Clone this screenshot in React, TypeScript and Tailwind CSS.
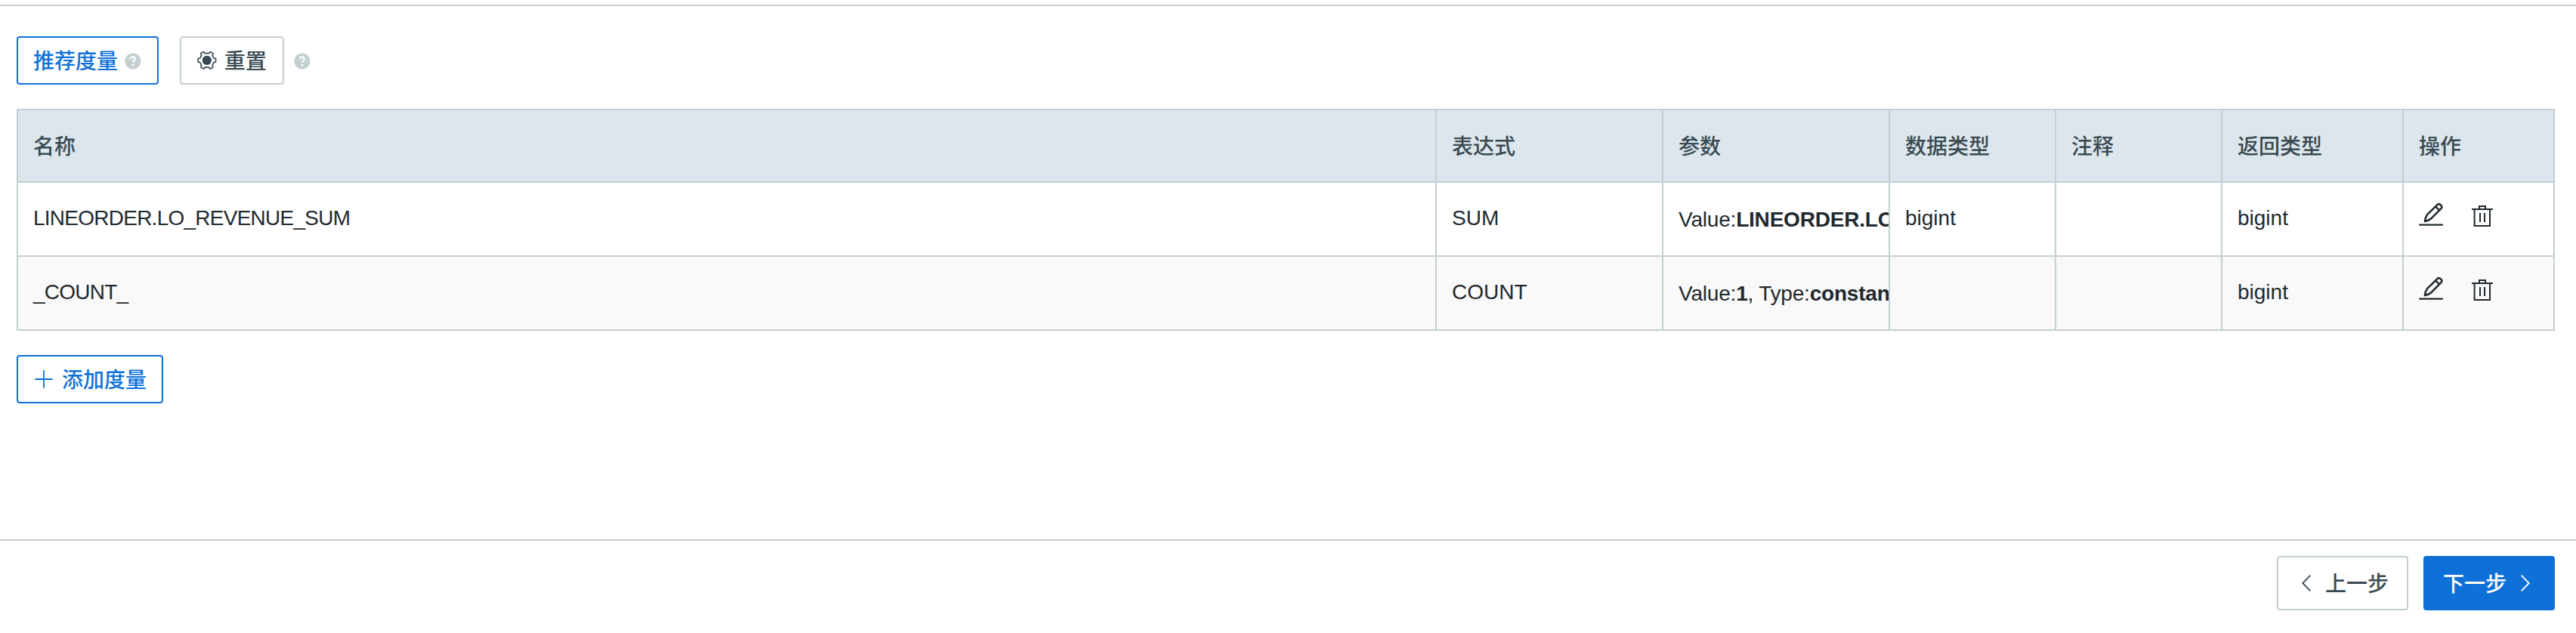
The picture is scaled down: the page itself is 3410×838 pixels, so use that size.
import React from "react";

function HelpIcon() {
  return (
    <svg viewBox="0 0 22 22" className="h-[22px] w-[22px] shrink-0" fill="none">
      <circle cx="11" cy="11" r="10.6" fill="#c4cfd2" />
      <path
        d="M8 8.4c0-1.9 1.2-3 3-3 1.7 0 2.9 1 2.9 2.6 0 2.3-2.8 2.5-2.8 5.1"
        stroke="#fff"
        strokeWidth="2.1"
      />
      <circle cx="11.1" cy="16.2" r="1.4" fill="#fff" />
    </svg>
  );
}

function GearIcon() {
  return (
    <svg viewBox="-0.2 -0.1 26.6 26.6" className="h-[26px] w-[26px] shrink-0" fill="none">
      <path
        d="M8.6 1.5 L10.4 3.6 H15.6 L17.4 1.5 L21.3 3.8 L20.4 6.4 L22.3 10.2 L24.9 10.6 V15.5 L22.3 15.9 L20.4 19.6 L21.3 22.3 L17.4 24.6 L15.6 22.5 H10.4 L8.6 24.6 L4.7 22.3 L5.6 19.6 L3.7 15.9 L1.1 15.5 V10.6 L3.7 10.2 L5.6 6.4 L4.7 3.8 Z"
        stroke="#394a52"
        strokeWidth="1.7"
      />
      <circle cx="13" cy="13" r="6.3" fill="#394a52" />
    </svg>
  );
}

function PlusIcon() {
  return (
    <svg viewBox="0 0 24 24" className="h-6 w-6 shrink-0" stroke="currentColor" strokeWidth="1.8">
      <path d="M0.3 12H23.7M12 0.3V23.7" />
    </svg>
  );
}

function EditIcon() {
  return (
    <svg viewBox="0 0 32 32" className="h-8 w-8 shrink-0" fill="none" stroke="currentColor">
      <path
        d="M7.9 25 Q8.6 19.5 11 16.2 L24.6 2.8 Q26.4 1.2 28.2 2.8 L29.6 4.2 Q31.2 6 29.6 7.8 L16.4 21.2 Q13.2 24 7.9 25 Z"
        strokeWidth="2.5"
        strokeLinejoin="round"
      />
      <path d="M21.8 5.2 L27.2 10.4" strokeWidth="2.3" />
      <path d="M1.2 29.6H30.8" strokeWidth="2.4" strokeLinecap="round" />
    </svg>
  );
}

function TrashIcon() {
  return (
    <svg viewBox="0 0 28 28" className="h-7 w-7 shrink-0" fill="none" stroke="currentColor" strokeWidth="2">
      <path d="M0 5H28M10 5V1H18V5M3.6 5V27H24V5M11 10V22M17 10V22" />
    </svg>
  );
}

const headers = ["名称", "表达式", "参数", "数据类型", "注释", "返回类型", "操作"];

const rows = [
  {
    name: "LINEORDER.LO_REVENUE_SUM",
    expression: "SUM",
    param: { value: "LINEORDER.LO_REVENUE", type: "column" },
    dataType: "bigint",
    comment: "",
    returnType: "bigint",
  },
  {
    name: "_COUNT_",
    expression: "COUNT",
    param: { value: "1", type: "constant" },
    dataType: "",
    comment: "",
    returnType: "bigint",
  },
];

const cell =
  "flex items-center overflow-hidden whitespace-nowrap border-b-2 border-r-2 border-[#c4cfd2] pl-5";

export default function App() {
  return (
    <div className="flex h-[838px] w-full flex-col overflow-hidden bg-white pt-1.5 font-['Liberation_Sans','Noto_Sans_CJK_SC',sans-serif] text-[28px] leading-[42px] text-[#1f292e]">
      <main className="flex h-[710px] shrink-0 flex-col items-start border-y-2 border-[#c4cfd2] pl-[22px] pr-7 pt-10">
        <div className="flex items-center">
          <button className="flex h-16 w-[188px] items-center rounded-[4px] border-2 border-[#0f71d8] pl-5 font-medium text-[#0f71d8]">
            <span className="w-[112px] whitespace-nowrap pt-1">推荐度量</span>
            <span className="ml-[9px] mt-0.5">
              <HelpIcon />
            </span>
          </button>
          <button className="ml-7 flex h-16 w-[138px] items-center rounded-[4px] border-2 border-[#c4cfd2] pl-[21px] font-medium text-[#394a52]">
            <GearIcon />
            <span className="ml-2.5 whitespace-nowrap pt-1">重置</span>
          </button>
          <span className="ml-[13px] mt-0.5">
            <HelpIcon />
          </span>
        </div>

        <div className="mt-8 w-full border-l-2 border-t-2 border-[#c4cfd2]">
          <div className="grid h-24 grid-cols-[1fr_300px_300px_220px_220px_240px_200px] bg-[#dce6ec] font-medium text-[#394a52]">
            {headers.map((h) => (
              <div key={h} className={cell}>
                <span className="pt-1">{h}</span>
              </div>
            ))}
          </div>
          {rows.map((r) => (
            <div
              key={r.name}
              className="grid h-[98px] grid-cols-[1fr_300px_300px_220px_220px_240px_200px] even:bg-white odd:bg-[#f9f9f9]"
            >
              <div className={cell}>
                <span className="pb-0.5 tracking-[-0.75px]">{r.name}</span>
              </div>
              <div className={cell}>
                <span className="pb-0.5">{r.expression}</span>
              </div>
              <div className={cell}>
                <span className="pt-0.5 tracking-[-0.2px]">
                  Value:<b>{r.param.value}</b>, Type:<b>{r.param.type}</b>
                </span>
              </div>
              <div className={cell}>
                <span className="pb-0.5">{r.dataType}</span>
              </div>
              <div className={cell}>{r.comment}</div>
              <div className={cell}>
                <span className="pb-0.5">{r.returnType}</span>
              </div>
              <div className={cell}>
                <span className="mb-[13px]">
                  <EditIcon />
                </span>
                <span className="mb-2 ml-[38px]">
                  <TrashIcon />
                </span>
              </div>
            </div>
          ))}
        </div>

        <button className="mt-8 flex h-16 w-[194px] items-center rounded-[4px] border-2 border-[#0f71d8] pl-[22px] font-medium text-[#0f71d8]">
          <PlusIcon />
          <span className="ml-3 whitespace-nowrap pt-1">添加度量</span>
        </button>
      </main>

      <footer className="flex justify-end gap-5 pr-7 pt-5">
        <button className="flex h-[72px] w-[174px] items-center rounded-[4px] border-2 border-[#c4cfd2] pl-[31px] font-medium text-[#394a52]">
          <svg viewBox="0 0 12 22" className="h-[22px] w-3" fill="none" stroke="currentColor" strokeWidth="1.8">
            <path d="M11.3 0.7L1.3 11L11.3 21.3" />
          </svg>
          <span className="ml-[19px] whitespace-nowrap pt-1">上一步</span>
        </button>
        <button className="flex h-[72px] w-[174px] items-center rounded-[4px] bg-[#0f71d8] pl-[26px] font-medium text-white">
          <span className="whitespace-nowrap pt-1">下一步</span>
          <svg viewBox="0 0 12 22" className="ml-[19px] h-[22px] w-3" fill="none" stroke="currentColor" strokeWidth="1.8">
            <path d="M0.7 0.7L10.7 11L0.7 21.3" />
          </svg>
        </button>
      </footer>
    </div>
  );
}
